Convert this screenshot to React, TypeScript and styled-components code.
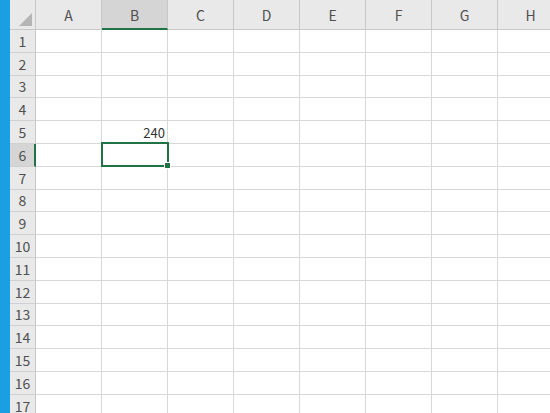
import { Fragment } from "react";
import styled, { createGlobalStyle } from "styled-components";

const GlobalStyle = createGlobalStyle`
  html, body {
    margin: 0;
    padding: 0;
    background: #ffffff;
    overflow: hidden;
  }
  body {
    font-family: "Noto Sans CJK JP", "Liberation Sans", sans-serif;
  }
`;

const COLS = ["A", "B", "C", "D", "E", "F", "G", "H"];
const ROWS = Array.from({ length: 17 }, (_, i) => i + 1);
const SEL_COL = "B";
const SEL_ROW = 6;

const Page = styled.div`
  display: flex;
  width: 550px;
  height: 413px;
  overflow: hidden;
`;

const Edge = styled.div`
  width: 10px;
  flex: none;
  background: #1a9fe3;
`;

const Sheet = styled.div`
  display: grid;
  grid-template-columns: 26px repeat(8, 66px);
  grid-template-rows: 30px;
  grid-auto-rows: 22.8px;
  flex: none;
  font-size: 13px;
  color: #444;
`;

const Corner = styled.div`
  display: flex;
  align-items: flex-end;
  justify-content: flex-end;
  padding: 0 3px 3px 0;
  background: #e9e9e9;
  border-right: 1px solid #c8c8c8;
  border-bottom: 1px solid #c8c8c8;
  box-sizing: border-box;
`;

const ColHead = styled.div<{ $active?: boolean }>`
  display: flex;
  align-items: center;
  justify-content: center;
  box-sizing: border-box;
  font-size: 14px;
  background: ${p => (p.$active ? "#d5d5d5" : "#e9e9e9")};
  color: #505050;
  border-right: 1px solid #c8c8c8;
  border-bottom: ${p => (p.$active ? "2px solid #217346" : "1px solid #c8c8c8")};
  padding-top: ${p => (p.$active ? "1px" : "0")};
`;

const RowHead = styled.div<{ $active?: boolean }>`
  display: flex;
  align-items: center;
  justify-content: center;
  box-sizing: border-box;
  font-size: 14px;
  background: ${p => (p.$active ? "#d5d5d5" : "#e9e9e9")};
  color: #505050;
  border-right: ${p => (p.$active ? "2px solid #217346" : "1px solid #c8c8c8")};
  border-bottom: 1px solid #d0d0d0;
  padding-left: ${p => (p.$active ? "1px" : "0")};
`;

const Cell = styled.div<{ $selected?: boolean }>`
  position: relative;
  display: flex;
  align-items: center;
  justify-content: flex-end;
  padding-right: 2px;
  box-sizing: border-box;
  border-right: 1px solid #d8d8d8;
  border-bottom: 1px solid #d8d8d8;
  font-size: 13px;
  color: #333;

  ${p =>
    p.$selected &&
    `
    &::after {
      content: "";
      position: absolute;
      top: -2px;
      left: -1px;
      right: -2px;
      bottom: -1px;
      border: 2px solid #217346;
      z-index: 1;
    }
    &::before {
      content: "";
      position: absolute;
      right: -4px;
      bottom: -3px;
      width: 5px;
      height: 5px;
      background: #217346;
      border: 1px solid #fff;
      z-index: 2;
    }
  `}
`;

const values: Record<string, string> = { B5: "240" };

export default function App() {
  return (
    <>
      <GlobalStyle />
      <Page>
        <Edge />
        <Sheet>
          <Corner>
            <svg width="13" height="13" viewBox="0 0 13 13">
              <polygon points="13,0 13,13 0,13" fill="#b5b5b5" />
            </svg>
          </Corner>
          {COLS.map(c => (
            <ColHead key={c} $active={c === SEL_COL}>
              {c}
            </ColHead>
          ))}
          {ROWS.map(r => (
            <Fragment key={r}>
              <RowHead $active={r === SEL_ROW}>{r}</RowHead>
              {COLS.map(c => (
                <Cell key={`${c}${r}`} $selected={c === SEL_COL && r === SEL_ROW}>
                  {values[`${c}${r}`] ?? ""}
                </Cell>
              ))}
            </Fragment>
          ))}
        </Sheet>
      </Page>
    </>
  );
}
